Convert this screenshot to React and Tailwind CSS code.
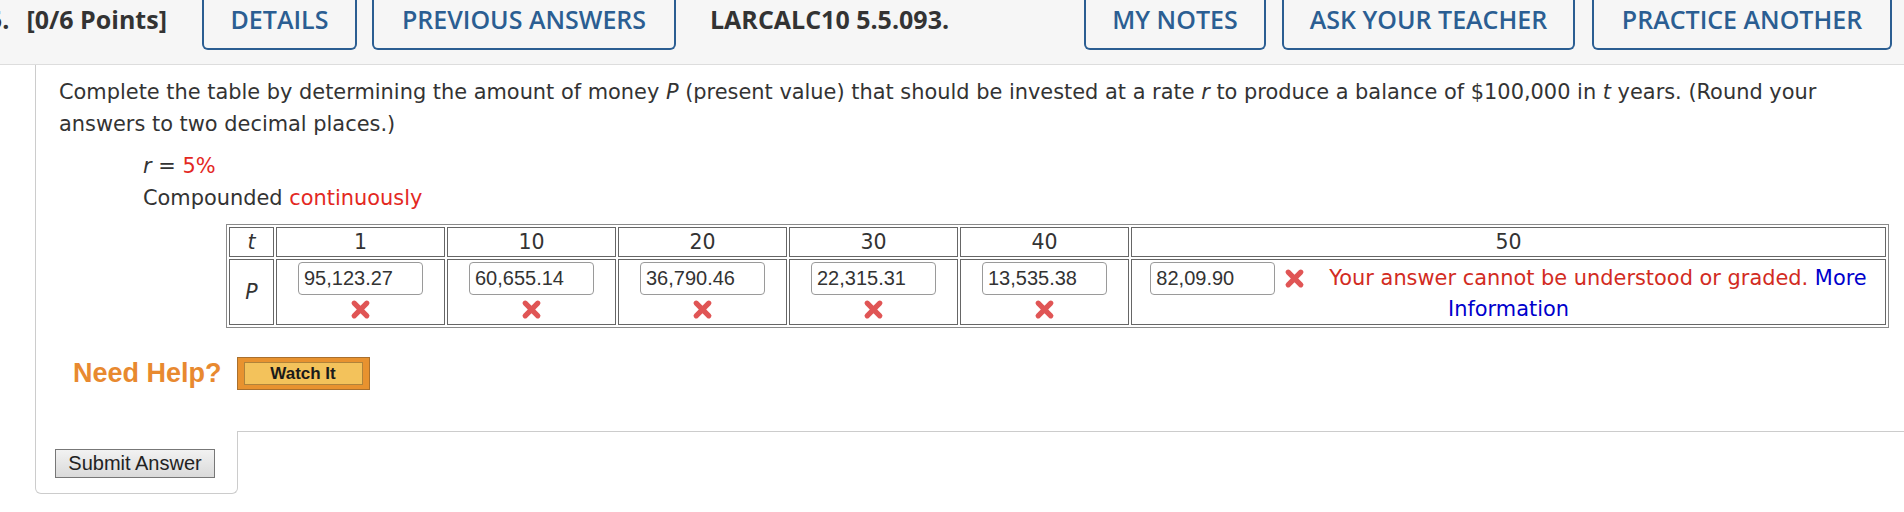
import React from "react";

const years = [1, 10, 20, 30, 40];
const answers = ["95,123.27", "60,655.14", "36,790.46", "22,315.31", "13,535.38"];

function RedX({ className = "" }) {
  return (
    <svg className={className} width="21" height="21" viewBox="0 0 20 20">
      <path d="M4 4 L16 16 M16 4 L4 16" stroke="#e05555" strokeWidth="5" strokeLinecap="round" />
    </svg>
  );
}

function TabButton({ width, children }) {
  return (
    <div
      className={`${width} h-[50px] shrink-0 border-2 border-t-0 border-[#2b5e92] rounded-b-[6px] flex justify-center pt-[4px] text-[25px] leading-[30px] font-semibold text-[#2b5e92] bg-[#f6f6f6]`}
    >
      {children}
    </div>
  );
}

function AnswerInput({ value, className = "" }) {
  return (
    <input
      readOnly
      value={value}
      className={`w-[125px] h-[33px] border border-[#9a9a9a] rounded-[4px] bg-white px-[5px] text-[20px] text-[#333] font-['Liberation_Sans',Arial,sans-serif] outline-none ${className}`}
    />
  );
}

export default function App() {
  return (
    <div className="w-[1904px] h-[512px] overflow-hidden bg-white font-['DejaVu_Sans',Verdana,sans-serif] text-[#333]">
      {/* header bar */}
      <div className="h-[65px] bg-[#f6f6f6] border-b border-[#dddddd] flex items-start font-['Open_Sans',sans-serif]">
        <div className="w-[202px] shrink-0 flex pt-[4px] text-[25px] leading-[30px] font-bold text-[#333]">
          <span className="-ml-[12px]">5.</span>
          <span className="ml-[17px]">[0/6 Points]</span>
        </div>
        <TabButton width="w-[155px]">DETAILS</TabButton>
        <div className="w-[15px] shrink-0" />
        <TabButton width="w-[304px]">PREVIOUS ANSWERS</TabButton>
        <div className="w-[374px] shrink-0 ml-[34px] pt-[4px] text-[25px] leading-[30px] font-bold text-[#333]">
          LARCALC10 5.5.093.
        </div>
        <TabButton width="w-[182px]">MY NOTES</TabButton>
        <div className="w-[16px] shrink-0" />
        <TabButton width="w-[293px]">ASK YOUR TEACHER</TabButton>
        <div className="w-[17px] shrink-0" />
        <TabButton width="w-[300px]">PRACTICE ANOTHER</TabButton>
      </div>

      {/* question box */}
      <div className="ml-[35px] border-l border-[#cccccc] pt-[11px] pb-[41px]">
        <p className="pl-[23px] pr-[40px] text-[20.9px] leading-[32px]">
          Complete the table by determining the amount of money <i>P</i> (present value) that should be invested at a rate <i>r</i> to produce a balance of $100,000 in <i>t</i> years. (Round your answers to two decimal places.)
        </p>
        <div className="mt-[10px] pl-[107px] text-[20.9px] leading-[32px]">
          <div>
            <i>r</i> = <span className="text-[#e3281f]">5%</span>
          </div>
          <div>
            Compounded <span className="text-[#e3281f]">continuously</span>
          </div>
        </div>

        <table className="mt-[10px] ml-[190px] w-[1663px] table-fixed border-separate border-spacing-[2px] border border-[#8a8a8a] text-[20.5px]">
          <colgroup>
            <col className="w-[45px]" />
            {years.map((y) => (
              <col key={y} className="w-[169px]" />
            ))}
            <col />
          </colgroup>
          <tbody>
            <tr className="h-[30px]">
              <td className="border border-[#666] text-center italic leading-[28px]">t</td>
              {years.map((y) => (
                <td key={y} className="border border-[#666] text-center leading-[28px]">{y}</td>
              ))}
              <td className="border border-[#666] text-center leading-[28px]">50</td>
            </tr>
            <tr className="h-[62px]">
              <td className="border border-[#666] text-center italic align-middle">P</td>
              {answers.map((a) => (
                <td key={a} className="border border-[#666] align-top pt-[2px]">
                  <div className="flex flex-col items-center">
                    <AnswerInput value={a} />
                    <RedX className="mt-[4px]" />
                  </div>
                </td>
              ))}
              <td className="border border-[#666] align-top pt-[2px] px-[2px] text-center leading-[29px] text-[20.9px]">
                <AnswerInput value="82,09.90" className="align-middle" />
                <RedX className="inline-block align-middle ml-[9px] mr-[24px]" />
                <span className="text-[#d22b22]">Your answer cannot be understood or graded.</span>{" "}
                <span className="text-[#0000cc]">More Information</span>
              </td>
            </tr>
          </tbody>
        </table>

        <div className="mt-[29px] ml-[37px] flex items-center">
          <span className="font-['Liberation_Sans',Arial,sans-serif] font-bold text-[27px] leading-[33px] text-[#e8892f]">
            Need Help?
          </span>
          <div className="ml-[15px] w-[133px] h-[33px] bg-[#e8922f] border border-[#a9702e] px-[6px] py-[4px]">
            <div className="h-full bg-[#f3c25b] border border-[#b0833a] flex items-center justify-center font-['Liberation_Sans',Arial,sans-serif] font-bold text-[17px] text-[#1a1a1a]">
              Watch It
            </div>
          </div>
        </div>
      </div>

      {/* submit tab */}
      <div className="flex">
        <div className="ml-[35px] w-[203px] h-[63px] border border-t-0 border-[#cccccc] rounded-b-[6px] pl-[19px] pt-[18px]">
          <button className="w-[160px] h-[29px] border border-[#777] bg-gradient-to-b from-[#f2f2f2] to-[#dadada] font-['Liberation_Sans',Arial,sans-serif] text-[20px] leading-[27px] text-[#222]">
            Submit Answer
          </button>
        </div>
        <div className="flex-1 border-t border-[#cccccc] -ml-px" />
      </div>
    </div>
  );
}
